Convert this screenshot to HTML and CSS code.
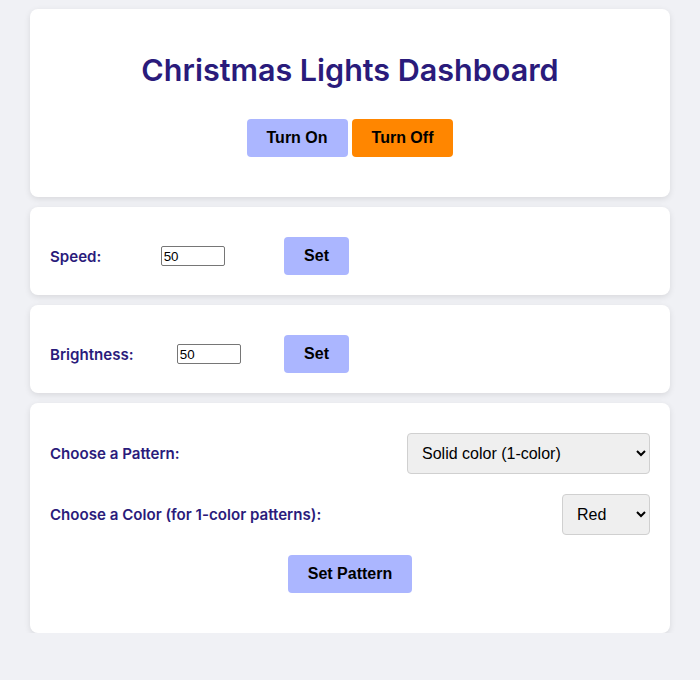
FILE: index.html
```html
<!DOCTYPE html>
<html>
<head>
<meta charset="utf-8">
<title>Christmas Lights Dashboard</title>
<link rel="stylesheet" href="styles.css">
</head>
<body>
<main class="container">
  <section class="card header-card">
    <h1 class="title">Christmas Lights Dashboard</h1>
    <div class="actions">
      <button class="btn btn-on">Turn On</button>
      <button class="btn btn-off">Turn Off</button>
    </div>
  </section>

  <section class="card">
    <div class="setting-row">
      <label class="label" for="speed">Speed:</label>
      <input class="num-input" id="speed" type="number" value="50">
      <button class="btn btn-on">Set</button>
    </div>
  </section>

  <section class="card">
    <div class="setting-row">
      <label class="label" for="brightness">Brightness:</label>
      <input class="num-input" id="brightness" type="number" value="50">
      <button class="btn btn-on">Set</button>
    </div>
  </section>

  <section class="card">
    <div class="select-row">
      <label class="label" for="pattern">Choose a Pattern:</label>
      <select class="select select-pattern" id="pattern">
        <option>Solid color (1-color)</option>
        <option>Twinkle</option>
        <option>Rainbow</option>
      </select>
    </div>
    <div class="select-row">
      <label class="label" for="color">Choose a Color (for 1-color patterns):</label>
      <select class="select select-color" id="color">
        <option>Red</option>
        <option>Green</option>
        <option>Blue</option>
      </select>
    </div>
    <div class="center-row">
      <button class="btn btn-on">Set Pattern</button>
    </div>
  </section>
</main>
</body>
</html>
```

FILE: styles.css
```css
html, body {
  margin: 0;
  padding: 0;
}

body {
  background: #f0f1f5;
  font-family: Inter, "Noto Sans", sans-serif;
}

.container {
  width: 640px;
  margin: 0 auto;
  padding-top: 9px;
  display: flex;
  flex-direction: column;
  gap: 10px;
}

.card {
  background: #ffffff;
  border-radius: 8px;
  box-shadow: 0 2px 6px rgba(0, 0, 0, 0.1);
  padding: 30px 20px 20px;
}

.header-card {
  padding: 20px;
  text-align: center;
}

.title {
  margin: 21px 0 30px;
  font-family: Inter, sans-serif;
  font-size: 30.5px;
  font-weight: 600;
  line-height: 39px;
  color: #2a1b7b;
}

.actions {
  display: flex;
  justify-content: center;
  gap: 4px;
  margin-bottom: 20px;
}

.btn {
  font-family: "Liberation Sans", Arial, sans-serif;
  font-size: 16px;
  font-weight: bold;
  line-height: 18px;
  color: #000;
  border: none;
  border-radius: 4px;
  padding: 10px 20px;
  cursor: pointer;
}

.btn-on {
  background: #abb6ff;
}

.btn-off {
  background: #ff8600;
}

.setting-row {
  width: 299px;
  display: flex;
  align-items: center;
  justify-content: space-between;
}

.label {
  font-family: Inter, sans-serif;
  font-size: 15.1px;
  font-weight: 600;
  color: #2a1b7b;
}

.num-input {
  box-sizing: border-box;
  width: 64px;
  height: 20px;
  font-family: "Liberation Sans", Arial, sans-serif;
  font-size: 13.33px;
  border: 1px solid #767676;
  border-radius: 2px;
  padding: 1px 2px;
}

.select-row {
  display: flex;
  align-items: center;
  justify-content: space-between;
  margin-bottom: 20px;
}

.select {
  box-sizing: border-box;
  height: 41px;
  font-family: "Liberation Sans", Arial, sans-serif;
  font-size: 16px;
  color: #000;
  background: #efefef;
  border: 1px solid #d0d0d0;
  border-radius: 4px;
  padding: 10px;
}

.select-pattern {
  width: 243px;
}

.select-color {
  width: 88px;
}

.center-row {
  display: flex;
  justify-content: center;
  margin-bottom: 20px;
}
```
